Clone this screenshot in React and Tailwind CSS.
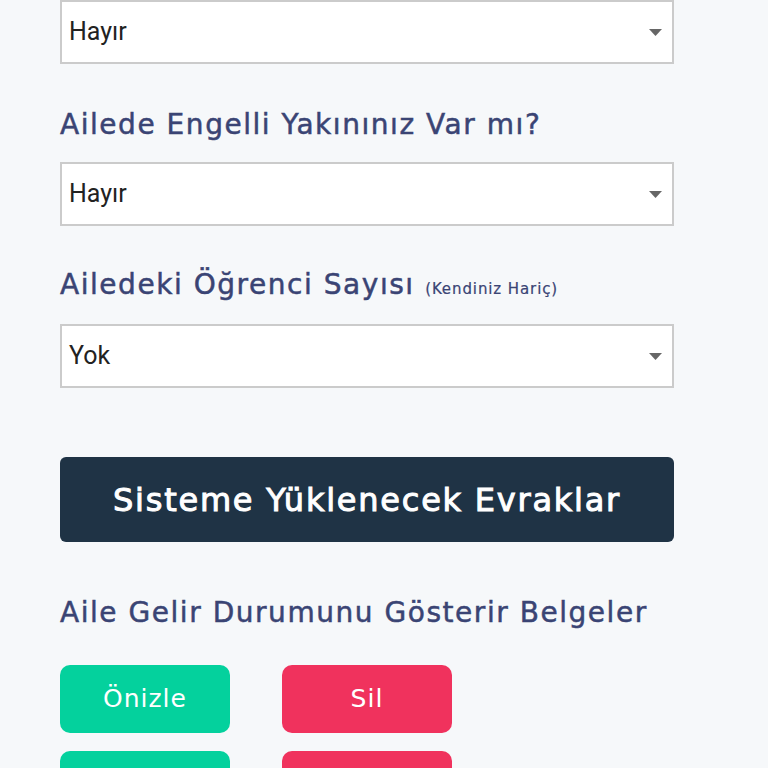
const heading =
  "font-['DejaVu_Sans',sans-serif] text-[#3a4474] tracking-[0.055em] [-webkit-text-stroke:0.5px_#3a4474]";

function Select({ value }) {
  return (
    <div className="flex h-[64px] w-full items-center justify-between border-2 border-[#cbcbcb] bg-white pl-[7px] pr-[10px]">
      <span className="font-['Roboto',sans-serif] text-[25px] text-[#222]">{value}</span>
      {/* small caret like the native select arrow */}
      <svg width="13" height="7" viewBox="0 0 13 7">
        <path d="M0 0h13L6.5 7z" fill="#666" />
      </svg>
    </div>
  );
}

export default function App() {
  return (
    <div className="h-[768px] w-full overflow-hidden bg-[#f6f8fa] pl-[60px]">
      <div className="flex w-[614px] flex-col">
        <Select value="Hayır" />

        <h2 className={`${heading} mt-[45px] mb-[21px] text-[28px] leading-[32px]`}>
          Ailede Engelli Yakınınız Var mı?
        </h2>
        <Select value="Hayır" />

        <h2 className={`${heading} mt-[43px] mb-[19px] text-[28px] leading-[32px]`}>
          Ailedeki Öğrenci Sayısı{" "}
          <span className="text-[15px] tracking-[0.06em] [-webkit-text-stroke:0.2px_#3a4474]">
            (Kendiniz Hariç)
          </span>
        </h2>
        <Select value="Yok" />

        <div className="mt-[69px] flex h-[85px] items-center justify-center rounded-[6px] bg-[#1f3345]">
          <span className="font-['DejaVu_Sans',sans-serif] text-[32px] tracking-[0.055em] text-white [-webkit-text-stroke:1px_#ffffff]">
            Sisteme Yüklenecek Evraklar
          </span>
        </div>

        <h2 className={`${heading} mt-[51px] text-[28px] leading-[40px]`}>
          Aile Gelir Durumunu Gösterir Belgeler
        </h2>

        <div className="mt-[32px] grid grid-cols-[170px_170px] gap-x-[52px] gap-y-[18px]">
          {[0, 1].map((i) => (
            <div key={i} className="contents">
              <button className="flex h-[68px] items-center justify-center rounded-[10px] bg-[#04d19d] font-['DejaVu_Sans',sans-serif] text-[25px] tracking-[0.04em] text-white">
                Önizle
              </button>
              <button className="flex h-[68px] items-center justify-center rounded-[10px] bg-[#f0325d] font-['DejaVu_Sans',sans-serif] text-[25px] tracking-[0.04em] text-white">
                Sil
              </button>
            </div>
          ))}
        </div>
      </div>
    </div>
  );
}
